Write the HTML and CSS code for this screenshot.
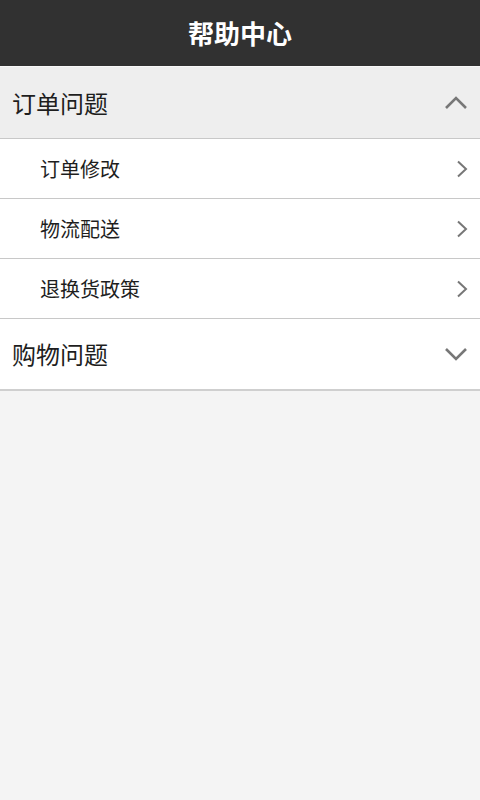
FILE: index.html
```html
<!DOCTYPE html>
<html lang="zh">
<head>
<meta charset="utf-8">
<link rel="stylesheet" href="styles.css">
</head>
<body>
<header class="topbar"><h1 class="title">帮助中心</h1></header>
<div class="group">
  <div class="group-head open">
    <span class="group-title">订单问题</span>
    <svg class="chev-v" width="24" height="14" viewBox="0 0 24 14"><path d="M2 12 L12 2 L22 12" fill="none" stroke="#777" stroke-width="2.6"/></svg>
  </div>
  <ul class="items">
    <li class="item"><span>订单修改</span><svg class="chev-r" width="12" height="18" viewBox="0 0 12 18"><path d="M2 1.5 L10 9 L2 16.5" fill="none" stroke="#777" stroke-width="2"/></svg></li>
    <li class="item"><span>物流配送</span><svg class="chev-r" width="12" height="18" viewBox="0 0 12 18"><path d="M2 1.5 L10 9 L2 16.5" fill="none" stroke="#777" stroke-width="2"/></svg></li>
    <li class="item"><span>退换货政策</span><svg class="chev-r" width="12" height="18" viewBox="0 0 12 18"><path d="M2 1.5 L10 9 L2 16.5" fill="none" stroke="#777" stroke-width="2"/></svg></li>
  </ul>
</div>
<div class="group">
  <div class="group-head closed">
    <span class="group-title">购物问题</span>
    <svg class="chev-v" width="24" height="14" viewBox="0 0 24 14"><path d="M2 2 L12 12 L22 2" fill="none" stroke="#777" stroke-width="2.6"/></svg>
  </div>
</div>
</body>
</html>
```
FILE: styles.css
```css
html, body {
  margin: 0;
  padding: 0;
}
body {
  background: #f4f4f4;
  font-family: "Noto Sans CJK SC", "Noto Sans", sans-serif;
  color: #1e1e1e;
  width: 480px;
  min-height: 800px;
}
.topbar {
  height: 66px;
  background: #313131;
  display: flex;
  align-items: center;
  justify-content: center;
  border-bottom: 1px solid #f8f8f8;
}
.title {
  margin: 0;
  color: #fff;
  font-size: 26px;
  font-weight: bold;
  line-height: 1;
}
.group-head {
  height: 71px;
  display: flex;
  align-items: center;
  justify-content: space-between;
  padding: 0 12px 0 12px;
  border-bottom: 1px solid #c8c8c8;
}
.group-head.open {
  background: #eeeeee;
}
.group-head.closed {
  height: 70px;
  background: #fff;
  border-bottom: 2px solid #cfcfcf;
}
.group-title {
  font-size: 24px;
  line-height: 1;
}
.chev-v {
  display: block;
}
.items {
  list-style: none;
  margin: 0;
  padding: 0;
  background: #fff;
}
.item {
  height: 59px;
  display: flex;
  align-items: center;
  justify-content: space-between;
  padding: 0 12px 0 40px;
  border-bottom: 1px solid #c8c8c8;
  font-size: 20px;
}
.chev-r {
  display: block;
}
```
